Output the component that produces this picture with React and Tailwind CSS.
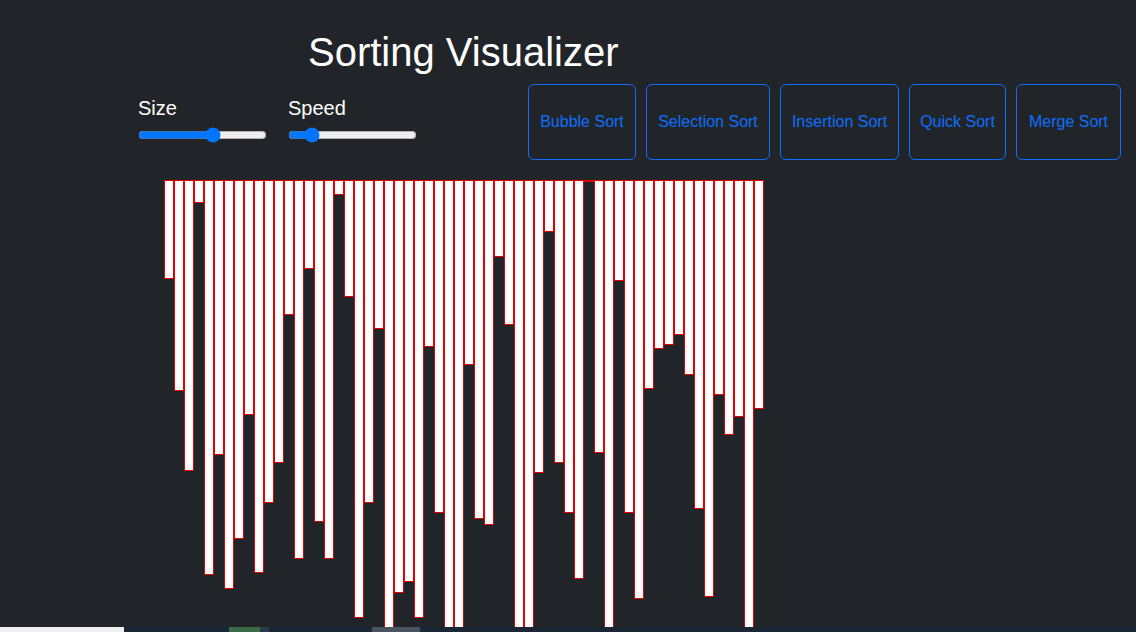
import { useState } from 'react';

const BAR_HEIGHTS = [
  99, 211, 291, 23, 395, 275, 409, 359, 235, 393,
  323, 283, 135, 379, 89, 342, 379, 15, 117, 438,
  323, 149, 480, 413, 402, 438, 167, 333, 480, 480,
  185, 339, 345, 77, 145, 480, 480, 293, 52, 283,
  333, 399, 2, 273, 480, 101, 333, 419, 209, 169,
  165, 155, 195, 329, 417, 215, 255, 237, 480, 229,
];

const ALGORITHMS = [
  { name: 'Bubble Sort', width: 'w-[108px]' },
  { name: 'Selection Sort', width: 'w-[124px]' },
  { name: 'Insertion Sort', width: 'w-[119px]' },
  { name: 'Quick Sort', width: 'w-[97px]' },
  { name: 'Merge Sort', width: 'w-[105px]' },
];

function Slider({ label, value, onChange }) {
  return (
    <div className="flex flex-col">
      <label className="text-[20px] leading-[23px] text-white">{label}</label>
      <input
        type="range"
        min="0"
        max="100"
        value={value}
        onChange={(e) => onChange(Number(e.target.value))}
        className="m-0 mt-[7px] h-4 w-[129px] accent-[#0075ff]"
      />
    </div>
  );
}

export default function App() {
  const [size, setSize] = useState(59);
  const [speed, setSpeed] = useState(14);

  return (
    <div className="flex h-[632px] flex-col overflow-hidden bg-[#212529] font-['Liberation_Sans',Arial,sans-serif]">
      <main className="flex-1 overflow-hidden">
        {/* Title */}
        <div className="pl-[308px] pt-[28px]">
          <h1 className="text-[40px] leading-[48px] font-normal text-white">Sorting Visualizer</h1>
        </div>

        {/* Controls */}
        <div className="mt-[8px] flex items-start justify-between pr-[15px]">
          <div className="flex gap-[21px] pl-[138px] pt-[13px]">
            <Slider label="Size" value={size} onChange={setSize} />
            <Slider label="Speed" value={speed} onChange={setSpeed} />
          </div>
          <div className="flex gap-[10px]">
            {ALGORITHMS.map((algo) => (
              <button
                key={algo.name}
                className={`flex h-[76px] items-center justify-center rounded-[6px] border border-[#0d6efd] text-[16px] text-[#0d6efd] ${algo.width}`}
              >
                {algo.name}
              </button>
            ))}
          </div>
        </div>

        {/* Bars */}
        <div className="mt-[20px] flex items-start pl-[164px]">
          {BAR_HEIGHTS.map((h, i) => (
            <div
              key={i}
              className="w-[10px] shrink-0 border border-[#e50000] bg-white"
              style={{ height: `${h}px` }}
            />
          ))}
        </div>
      </main>

      {/* Taskbar strip */}
      <div className="flex h-[5px] shrink-0 bg-[#1a2636]">
        <div className="w-[124px] bg-[#f0f0f0]" />
        <div className="w-[105px]" />
        <div className="w-[31px] bg-[#3b6a46]" />
        <div className="w-[9px] bg-[#2c3b4b]" />
        <div className="w-[103px]" />
        <div className="w-[48px] bg-[#4b5561]" />
      </div>
    </div>
  );
}
